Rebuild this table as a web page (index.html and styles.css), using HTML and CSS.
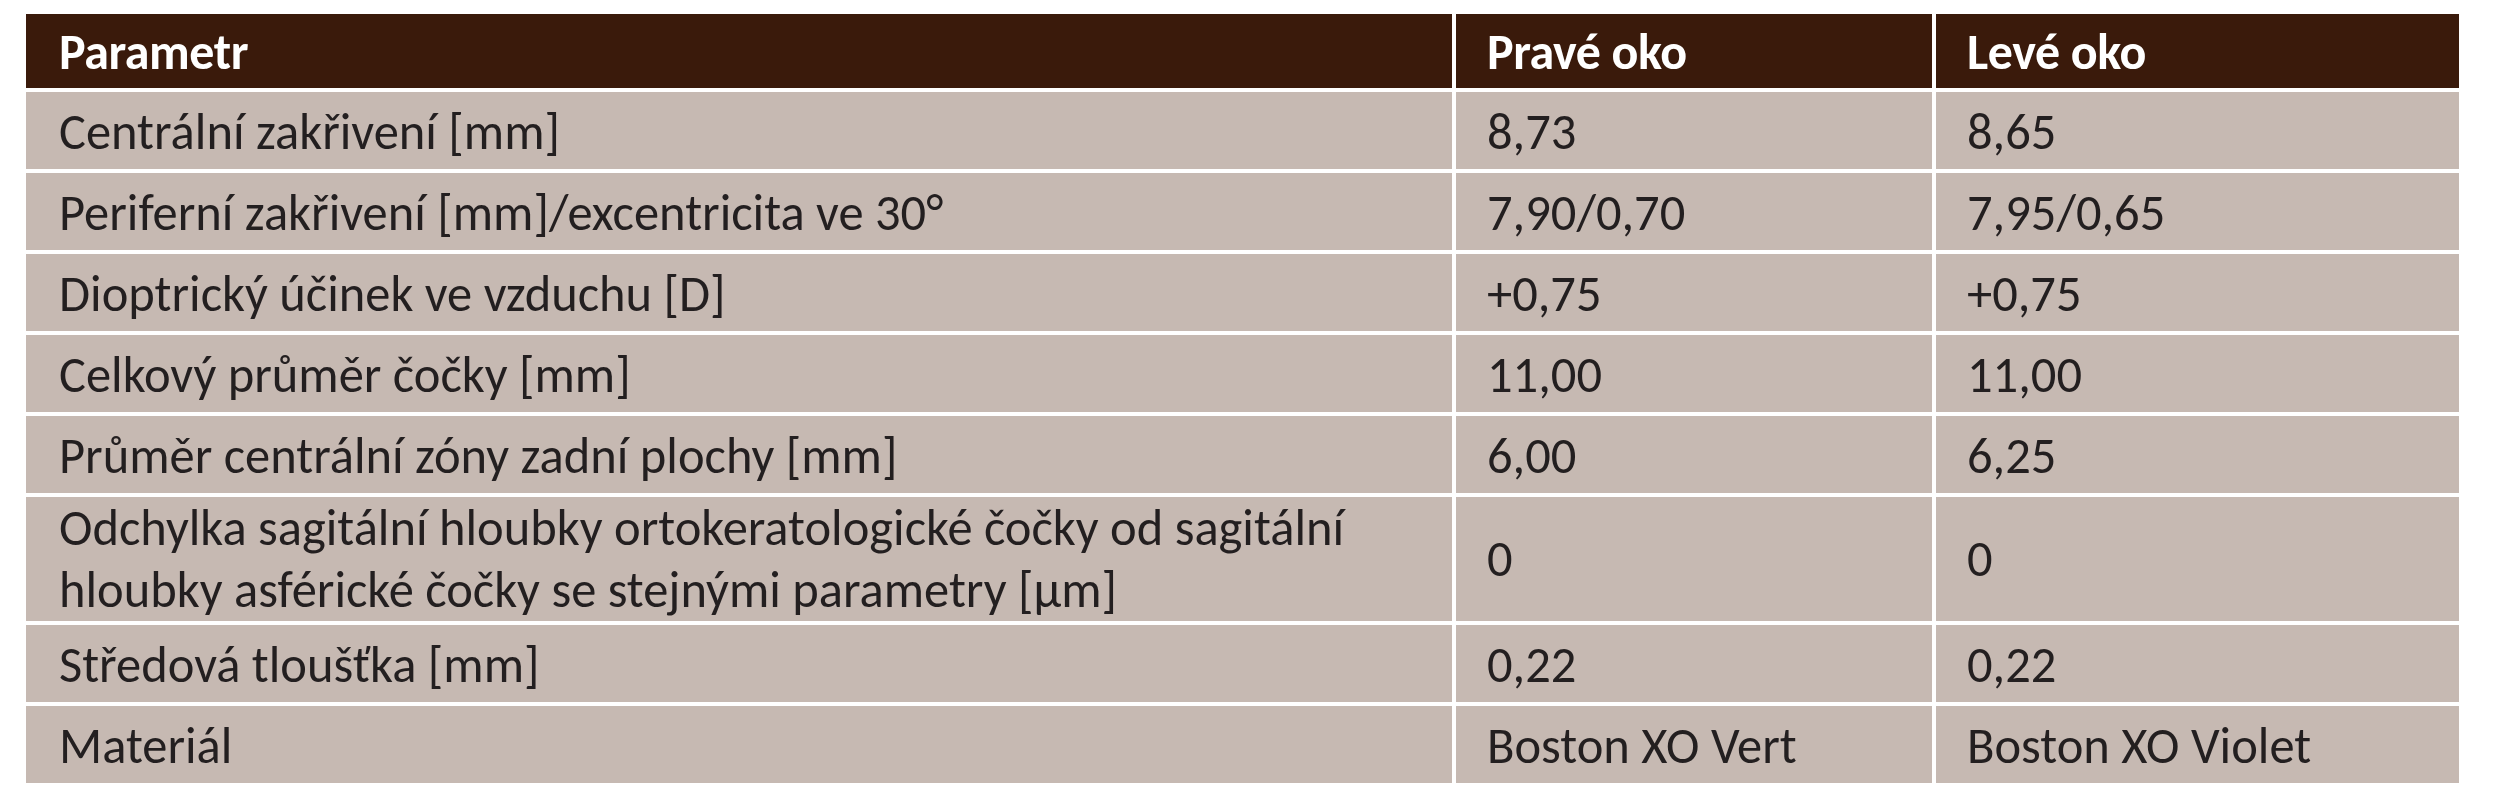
FILE: index.html
```html
<!DOCTYPE html>
<html lang="cs">
<head>
<meta charset="utf-8">
<title>Parametry čoček</title>
<link rel="stylesheet" href="styles.css">
</head>
<body>
<table class="params">
  <colgroup>
    <col class="c-param">
    <col class="c-right">
    <col class="c-left">
  </colgroup>
  <thead>
    <tr class="head">
      <th>Parametr</th>
      <th>Pravé oko</th>
      <th>Levé oko</th>
    </tr>
  </thead>
  <tbody>
    <tr><td>Centrální zakřivení [mm]</td><td>8,73</td><td>8,65</td></tr>
    <tr><td>Periferní zakřivení [mm]/excentricita ve 30°</td><td>7,90/0,70</td><td>7,95/0,65</td></tr>
    <tr><td>Dioptrický účinek ve vzduchu [D]</td><td>+0,75</td><td>+0,75</td></tr>
    <tr><td>Celkový průměr čočky [mm]</td><td>11,00</td><td>11,00</td></tr>
    <tr><td>Průměr centrální zóny zadní plochy [mm]</td><td>6,00</td><td>6,25</td></tr>
    <tr class="tall"><td>Odchylka sagitální hloubky ortokeratologické čočky od sagitální<br>hloubky asférické čočky se stejnými parametry [µm]</td><td>0</td><td>0</td></tr>
    <tr><td>Středová tloušťka [mm]</td><td>0,22</td><td>0,22</td></tr>
    <tr><td>Materiál</td><td>Boston XO Vert</td><td>Boston XO Violet</td></tr>
  </tbody>
</table>
</body>
</html>
```
FILE: styles.css
```css
html, body {
  margin: 0;
  padding: 0;
  background: #ffffff;
}

body {
  padding: 10px 0 0 22px;
  font-family: "Carlito", "Lato", "Liberation Sans", sans-serif;
}

.params {
  border-collapse: separate;
  border-spacing: 4px;
  table-layout: fixed;
  width: 2441px;
}

.c-param { width: 1426px; }
.c-right { width: 476px; }
.c-left { width: 523px; }

.params th,
.params td {
  padding: 2px 10px 0 33px;
  text-align: left;
  vertical-align: middle;
  font-size: 50.5px;
  line-height: 60px;
}

.params th {
  background: #3a1a0b;
  color: #ffffff;
  font-weight: 700;
  font-size: 50px;
  letter-spacing: -0.4px;
}

.params td {
  background: #c6b9b2;
  color: #231f20;
  font-weight: 400;
}

.params th:not(:first-child),
.params td:not(:first-child) {
  padding-left: 31px;
}

.head { height: 74px; }
.params tbody tr { height: 77px; }
.params tbody tr.tall { height: 121px; }
.params tbody tr.tall td { line-height: 62px; padding-top: 0; }
```
